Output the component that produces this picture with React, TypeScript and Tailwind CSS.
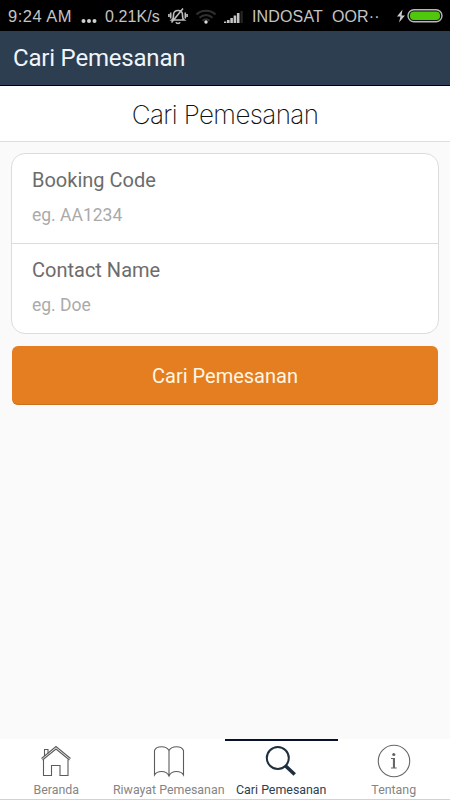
import { useState } from 'react';

const FIELDS = [
  { name: 'bookingCode', label: 'Booking Code', placeholder: 'eg. AA1234' },
  { name: 'contactName', label: 'Contact Name', placeholder: 'eg. Doe' },
];

const TABS = [
  { label: 'Beranda', Icon: HomeIcon },
  { label: 'Riwayat Pemesanan', Icon: BookIcon },
  { label: 'Cari Pemesanan', Icon: SearchIcon },
  { label: 'Tentang', Icon: InfoIcon },
];

function HomeIcon() {
  return (
    <svg width="32" height="34" viewBox="0 0 32 34" fill="none" stroke="#5c5c5c" strokeWidth="1.1">
      <path d="M1.500 14.500 16 2.500l14.500 12" />
      <path d="M2.500 16 16 5l13.500 11" />
      <path d="M3.500 15.500v16H11.500V21.500h8.500v10h8V15.500" />
      <path d="M4.500 12V5.500H8v4" />
    </svg>
  );
}

function BookIcon() {
  return (
    <svg width="32" height="34" viewBox="0 0 32 34" fill="none" stroke="#5c5c5c" strokeWidth="1.1">
      <path d="M16 32V6.500C14.500 4 11.500 2.800 8.500 2.800S2.500 4 1.500 6.500V31c1.500-2.500 4-3.500 7-3.500s6 1 7.500 4.500c1.500-3.500 4.500-4.500 7.500-4.500s5.500 1 7 3.500V6.500c-1-2.500-4-3.700-7-3.700s-6 1.200-7.500 3.700" />
    </svg>
  );
}

function SearchIcon() {
  return (
    <svg width="32" height="34" viewBox="0 0 32 34" fill="none" stroke="#1f2f3d">
      <circle cx="12.800" cy="14" r="11" strokeWidth="2" />
      <path d="m20 21.500 2.500 2.500" strokeWidth="2" />
      <path d="m20.700 22 9 8.500" strokeWidth="3.600" />
    </svg>
  );
}

function InfoIcon() {
  return (
    <svg width="34" height="34" viewBox="0 0 34 34">
      <circle cx="17" cy="17" r="15.700" fill="none" stroke="#666" strokeWidth="1.100" />
      <circle cx="16.800" cy="10.500" r="1.600" fill="#666" />
      <path d="M14 14h4v9.500h1.800v1H14v-1h1.900V15H14z" fill="#666" />
    </svg>
  );
}

function StatusBar() {
  return (
    <div className="flex h-[31px] shrink-0 items-center bg-black pt-0.5 pl-2 font-['Liberation_Sans',sans-serif] text-[16.500px] whitespace-pre text-[#c4c4c4]">
      <span className="w-[72px] tracking-[0.500px]">9:24 AM</span>
      <svg width="25" height="20" viewBox="0 0 25 20" fill="#d0d0d0">
        <circle cx="3.500" cy="14" r="2" />
        <circle cx="9" cy="14" r="2" />
        <circle cx="14.500" cy="14" r="2" />
      </svg>
      <span className="w-[63px] text-[16px] tracking-[0.100px]">0.21K/s</span>
      {/* Muted bell */}
      <svg width="20" height="20" viewBox="0 0 20 20" fill="none" stroke="#bdbdbd" strokeWidth="1.600">
        <path d="M4 13c1.500-1 1.500-3 1.500-5 0-3 2-4.500 4.500-4.500s4.500 1.500 4.500 4.500c0 2 0 4 1.500 5zM8 15.300c.5 1.500 3.500 1.500 4 0M3.500 15.500 15 1.500M2.700 5.500v6M.9 7v3M17.300 5.500v6M19.100 7v3" />
      </svg>
      <svg className="ml-[7px]" width="22" height="18" viewBox="0 0 22 18" fill="none" stroke="#303030" strokeWidth="2">
        <path d="M1.500 6.500c5-5 14-5 19 0M4.500 9.700c4-3.500 9-3.500 13 0M7.500 12.700c2-2 5-2 7 0" />
        <circle cx="11" cy="14" r="1.700" fill="#ddd" stroke="none" />
      </svg>
      <svg className="ml-[6px]" width="21" height="18" viewBox="0 0 21 18" fill="#c4c4c4">
        <path d="M1 13.500h2.300V15H1zM4 12h2.600v3H4zM7.300 10h2.600v5H7.300zM10.600 7.500h2.600V15h-2.600zM13.900 5h2.600v10h-2.600z" />
        <path d="M17.500 3h2.300v12h-2.300z" fill="#242424" />
      </svg>
      <span className="ml-[8px] w-[145px] text-[16px] tracking-[0.150px]">INDOSAT  OOR··</span>
      <svg width="48" height="18" viewBox="0 0 48 18">
        <path d="M5.500 1.500 0 8.500h3.500L2 14.500l6-7H4.500z" fill="#ccc" />
        <rect x="11" y="1.700" width="34" height="12" rx="6" fill="#111" stroke="#b8b8b8" strokeWidth="1.400" />
        <rect x="13" y="3.500" width="30" height="8.400" rx="4" fill="#4fc80c" />
      </svg>
    </div>
  );
}

export default function App() {
  const [active, setActive] = useState('Cari Pemesanan');

  return (
    <div className="flex h-[800px] w-[450px] flex-col overflow-hidden bg-[#fafafa] font-['Roboto',sans-serif]">
      <StatusBar />
      <header className="flex h-[55px] shrink-0 items-center border-b border-black bg-[#2c3e50] pl-[13px] text-2xl tracking-[-0.200px] text-[#f0f5fa]">
        Cari Pemesanan
      </header>
      <h1 className="flex h-14 shrink-0 items-center justify-center border-b border-[#dedede] bg-white pt-0.5 font-['Inter',sans-serif] text-[26px] font-extralight tracking-[-0.600px] text-[#111]">
        Cari Pemesanan
      </h1>

      <main className="flex-1 px-3 pt-[11px]">
        <div className="-mx-px h-[181px] rounded-[14px] border border-[#dcdcdc] bg-white">
          {FIELDS.map((f, i) => (
            <label key={f.name} className={`block px-5 pt-[13px] ${i > 0 ? 'h-[90px] border-t border-[#dcdcdc]' : 'h-[89px]'}`}>
              <span className="block text-xl leading-[26px] text-[#6c6c6c]">{f.label}</span>
              <input
                name={f.name}
                placeholder={f.placeholder}
                className="mt-[10px] block w-full text-[17.500px] leading-6 outline-none placeholder:text-[#aaa]"
              />
            </label>
          ))}
        </div>
        <button className="mt-3 block h-[59px] w-full rounded-md border-b border-[#cb701c] bg-[#e47e20] pt-0.5 text-xl text-[#fff6e4]">
          Cari Pemesanan
        </button>
      </main>

      <nav className="grid h-[61px] shrink-0 grid-cols-4 border-b border-[#d2d2d2] bg-white">
        {TABS.map(({ label, Icon }) => (
          <button
            key={label}
            onClick={() => setActive(label)}
            className={`flex flex-col items-center border-t-2 pt-[3px] text-[12.400px] whitespace-nowrap ${
              active === label ? 'border-[#08112c] text-[#2c3e50]' : 'border-transparent text-[#858585]'
            }`}
          >
            <Icon />
            <span className="mt-1 leading-4">{label}</span>
          </button>
        ))}
      </nav>
    </div>
  );
}
